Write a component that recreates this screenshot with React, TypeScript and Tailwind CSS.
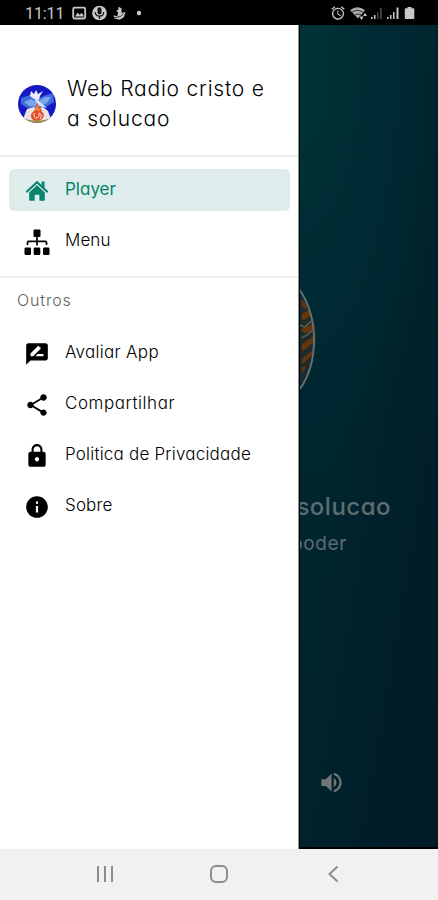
import { ReactNode } from "react";
import { MdAlarm, MdInfo, MdLock, MdRateReview, MdShare, MdVolumeUp } from "react-icons/md";

interface MenuItemProps {
  label: string;
  icon: ReactNode;
  tracking?: string;
  active?: boolean;
}

function MenuItem({ label, icon, tracking = "tracking-normal", active }: MenuItemProps) {
  return (
    <div
      className={`ml-[9px] mr-2 flex h-[42px] items-center rounded-[5px] ${
        active ? "bg-[#deedeb] text-[#07836e]" : "text-black"
      }`}
    >
      <div className="flex w-14 shrink-0 items-center justify-center pt-0.5">{icon}</div>
      <span
        className={`-mt-[3px] whitespace-nowrap text-[17px] leading-6 ${tracking} ${
          active ? "" : "font-light text-black"
        }`}
      >
        {label}
      </span>
    </div>
  );
}

function HomeIcon() {
  return (
    <svg viewBox="0 0 22 22" className="h-[22px] w-[22px]" fill="currentColor">
      <path d="M1 11.6L11 2.2l10 9.4" fill="none" stroke="currentColor" strokeWidth="2.1" strokeLinecap="round" />
      <path d="M15.6 1.6h2.9v6.6l-2.9-2.8z" />
      <path d="M11 5.2l7.8 7.2v7.4q0 1-1 1h-4.4v-6H8.7v6H4.2q-1 0-1-1v-7.4z" />
    </svg>
  );
}

function SitemapIcon() {
  return (
    <svg viewBox="0 0 26 27" className="h-[27px] w-[26px]" fill="currentColor">
      <rect x="9.5" y="0.5" width="7" height="7.5" rx="1" />
      <rect x="0.5" y="18.5" width="6.5" height="7.5" rx="1.3" />
      <rect x="9.7" y="18.5" width="6.6" height="7.5" rx="1.3" />
      <rect x="19" y="18.5" width="6.5" height="7.5" rx="1.3" />
      <path d="M13 7v9.5M3.5 16v-2.7q0-1 1-1h17q1 0 1 1v2.7" fill="none" stroke="currentColor" strokeWidth="1.7" />
    </svg>
  );
}

function Avatar() {
  return (
    <svg viewBox="0 0 38 38" className="h-[38px] w-[38px] shrink-0">
      <defs>
        <clipPath id="avatar">
          <circle cx="19" cy="19" r="19" />
        </clipPath>
      </defs>
      <g clipPath="url(#avatar)">
        <rect width="38" height="38" fill="#1717c4" />
        <path d="M3 13l9-3 7 4 9-4 7-2 1 9-8 5-9 2-10-1-6-4z" fill="#3f6bdc" />
        <path d="M6 17l7-3 6 3 8-5 6 0-4 6-8 4-10-1z" fill="#7ba6ea" />
        <path d="M13 6l3 3 2-4 2 4 5-3-3 5-1 4-5-1-4-3z" fill="#e9edfb" />
        <path d="M16 12l4 3 3 3 6 5-7-2-4-4z" fill="#dce8fb" />
        <path d="M9 24l7-2 3 2 6-2 5 4 3 8-14 3-14-3z" fill="#e9e4e1" />
        <path d="M19 17c0 4 5 6 5 10 3 1 2 6-1 8-4 2-9 1-10-3-1-4 3-5 4-8 1-2 1-5 2-7z" fill="#e2502c" />
        <path d="M19 19c0 3 3 5 3 7-2-1-5-1-5 1 0-2 2-5 2-8z" fill="#f6913c" />
        <path d="M16 28q0 6 3 5t2-5q4 2 1 6" fill="none" stroke="#fbe3df" strokeWidth="1" />
        <path d="M7 34q12 3 24 0v2q-12 4-24 0z" fill="#a99043" />
      </g>
    </svg>
  );
}

function StatusBar() {
  return (
    <header className="flex h-[25px] items-center bg-black pl-[25px] pr-[22px] text-[#c8c8c8]">
      <span className="w-[38px] whitespace-nowrap pt-0.5 font-[Roboto] text-[16px] leading-5 tracking-[-0.1px]">
        11:11
      </span>
      <svg viewBox="0 0 72 16" className="ml-[9px] h-4 w-[72px]" fill="currentColor">
        <rect x="1.2" y="2.7" width="12" height="10.8" rx="1.5" fill="none" stroke="currentColor" strokeWidth="1.8" />
        <path d="M3 11.5l2.7-4 2 2.4 2-2.2 2.4 3.8z" />
        <circle cx="27.5" cy="8" r="7.3" />
        <rect x="25.5" y="2.2" width="4" height="7.2" rx="2" fill="#111" />
        <path d="M23.3 7c0 5.5 8.4 5.5 8.4 0M27.5 11v3" fill="none" stroke="#111" strokeWidth="1.2" />
        <path d="M46.5 1.8l3 1.5.2 4.6 3.8-.8-1.7 5.2-4 2.4-5.2-1.2-1-3.2 3.7 1 .8-4-2-1.5 2.2-1z" />
        <path d="M42.5 12.7l6-1.2 3-3" fill="none" stroke="#111" strokeWidth=".8" />
        <circle cx="67" cy="8" r="2.2" />
      </svg>
      <div className="ml-auto flex items-center">
        <MdAlarm className="h-4 w-4" stroke="currentColor" strokeWidth={0} />
        <svg viewBox="0 0 66 16" className="ml-1 h-4 w-[66px]" fill="currentColor">
          <path d="M0 5.2Q7.5-.5 15 5.2L8 13.5z" opacity=".85" />
          <path d="M2 7.3Q7.5 3.5 13 7.3M4.7 10Q8 7.8 11.3 10" fill="none" stroke="#111" strokeWidth=".8" />
          <path d="M9.5 11.5h4L11.5 15zM13 11l2-3 2 3z" />
          <path d="M21 12h1.5v2H21zM24 10h1.5v4H24z" />
          <path d="M27 7h1.5v7H27zM30 3h1.8v11H30z" opacity=".35" />
          <path d="M37 12h1.5v2H37zM40 10h1.5v4H40zM43 7h1.5v7H43zM46.5 2.5h2v11.5h-2z" />
          <path d="M57.5 2h4v1.3h2q.8 0 .8.8v9q0 .9-.9.9h-7.7q-.9 0-.9-.9v-9q0-.8.8-.8h1.9z" />
        </svg>
      </div>
    </header>
  );
}

function Drawer() {
  return (
    <aside className="absolute inset-y-0 left-0 w-[299px] border-r border-[#84959a] bg-white shadow-[1px_0_0_#000]">
      <div className="flex h-[132px] items-center border-b-2 border-[#eeeeee] pl-[18px] pt-[27px]">
        <Avatar />
        <h1 className="ml-[11px] whitespace-nowrap text-[21px] font-light leading-[30px] tracking-[0.8px] text-black">
          <span className="block">Web Radio cristo e</span>
          <span className="block">a solucao</span>
        </h1>
      </div>
      <nav className="flex h-[121px] flex-col gap-[9px] border-b-2 border-[#eeeeee] pt-3">
        <MenuItem label="Player" active icon={<HomeIcon />} />
        <MenuItem label="Menu" tracking="tracking-[0.1px]" icon={<SitemapIcon />} />
      </nav>
      <h2 className="pl-[17px] pt-2.5 text-[16px] font-light leading-6 tracking-[0.85px] text-[#606060]">Outros</h2>
      <nav className="mt-5 flex flex-col gap-[9px]">
        <MenuItem
          label="Avaliar App"
          tracking="tracking-[0.3px]"
          icon={<MdRateReview className="h-[26px] w-[26px]" />}
        />
        <MenuItem
          label="Compartilhar"
          tracking="tracking-[0.55px]"
          icon={<MdShare className="h-[26px] w-[26px]" />}
        />
        <MenuItem
          label="Politica de Privacidade"
          tracking="tracking-[0.2px]"
          icon={<MdLock className="h-[26px] w-[26px]" />}
        />
        <MenuItem label="Sobre" tracking="tracking-[0.15px]" icon={<MdInfo className="h-[26px] w-[26px]" />} />
      </nav>
    </aside>
  );
}

function PlayerScreen() {
  return (
    <main className="flex flex-1 flex-col items-end border-b-2 border-black bg-[radial-gradient(ellipse_150px_420px_at_300px_5%,#003438_0%,#002a33_55%,transparent_100%),linear-gradient(100deg,#00252f_70%,#001e29_88%,#001c27_100%)] text-[#5f6c72]">
      {/* Cover art, mostly behind the drawer */}
      <svg viewBox="0 0 20 120" className="mr-[118px] mt-[255px] h-[120px] w-5">
        <path d="M0 14Q24 50 14 70Q10 92 0 104z" fill="#1f2a2b" />
        <path
          d="M2 19l5 7-1 4-4-4zM2 34l7-4 3 5-8 5-2-1zM2 49l4-2 8-4 1 5-8 5-5-1zM2 64l11-7 2 4-8 7-5 3zM2 79l10-8 0 4-7 7-3 2zM2 88l4-3-3 8z"
          fill="#663608"
        />
        <path d="M0 45l5 2 6-6M1 58l6-3 6-5" fill="none" stroke="#6b6558" strokeWidth="1.3" />
        <path d="M-1 9C19 37 19 83-1 110" fill="none" stroke="#656c72" strokeWidth="2" />
      </svg>
      <span className="mr-[47px] mt-[87px] whitespace-nowrap text-[24px] font-medium leading-10 tracking-[0.5px]">
        a solucao
      </span>
      <span className="mr-[91px] whitespace-nowrap text-[19px] leading-[34px] tracking-[0.6px]">poder</span>
      <MdVolumeUp className="mr-[93px] mt-[208px] h-[27px] w-[27px] text-[#727477]" />
    </main>
  );
}

function NavigationBar() {
  return (
    <footer className="flex h-[51px] items-center bg-[#f1f1f1] text-[#8c8c8c]">
      <svg viewBox="0 0 438 51" className="h-[51px] w-full" fill="none" stroke="currentColor" strokeWidth="2">
        <path d="M98 17v16M105 17v16M112 17v16" />
        <rect x="211" y="17" width="16" height="16" rx="5" />
        <path d="M337.5 17.5l-8 7.5 8 7.5" />
      </svg>
    </footer>
  );
}

export default function App() {
  return (
    <div className="flex h-[900px] w-[438px] flex-col overflow-hidden bg-white font-[Inter,sans-serif] [font-feature-settings:'cv11']">
      <StatusBar />
      <div className="relative flex min-h-0 flex-1">
        <PlayerScreen />
        <Drawer />
      </div>
      <NavigationBar />
    </div>
  );
}
